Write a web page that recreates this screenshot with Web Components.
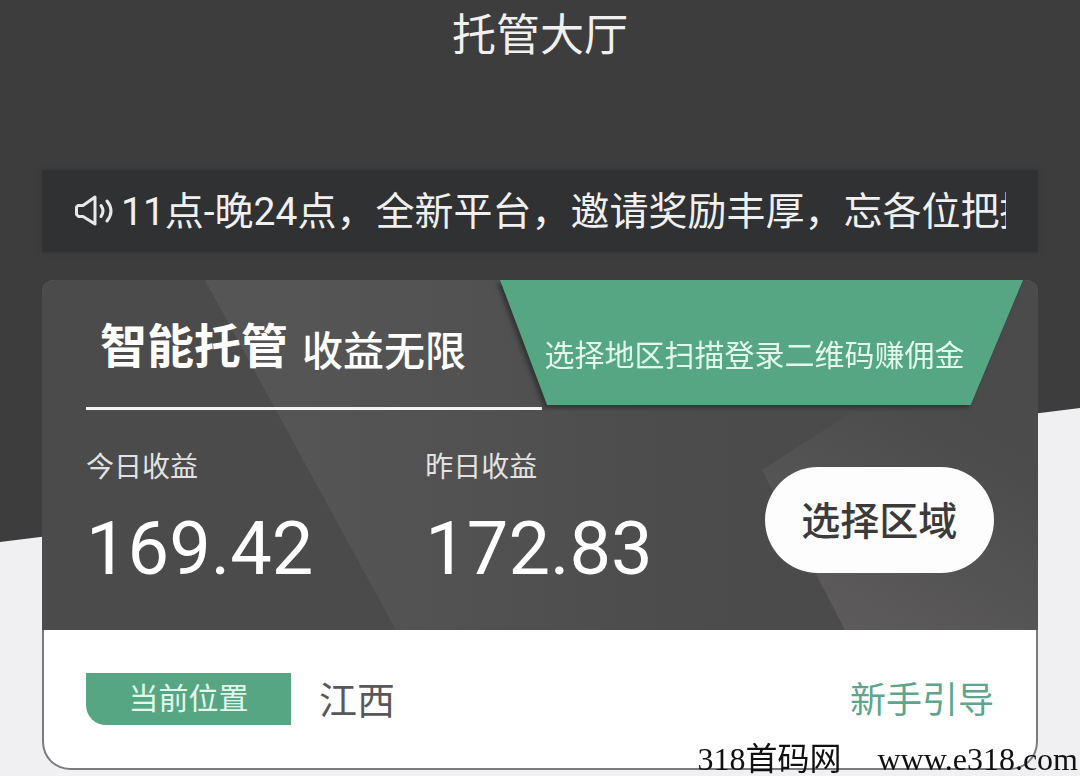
<!DOCTYPE html>
<html lang="zh-CN">
<head>
<meta charset="utf-8">
<title>托管大厅</title>
<style>
    body {
        margin: 0;
        background: #f0f0f3;
        font-family: Roboto, "Noto Sans CJK SC", sans-serif;
    }
</style>
</head>
<body>
<hosting-hall heading="托管大厅">
    <notice-bar>11点-晚24点，全新平台，邀请奖励丰厚，忘各位把握</notice-bar>
    <income-card>
        <span slot="title">智能托管</span>
        <span slot="subtitle">收益无限</span>
        <tip-ribbon slot="tip">选择地区扫描登录二维码赚佣金</tip-ribbon>
        <income-stat slot="stats" label="今日收益" value="169.42"></income-stat>
        <income-stat slot="stats" label="昨日收益" value="172.83"></income-stat>
        <area-button slot="action">选择区域</area-button>
        <location-bar slot="footer" label="当前位置" place="江西" guide="新手引导"></location-bar>
    </income-card>
</hosting-hall>
<site-mark name="318首码网" site="www.e318.com"></site-mark>

<script>
class HostingHall extends HTMLElement {
    constructor() {
        super();
        this.attachShadow({ mode: 'open' });
    }

    connectedCallback() {
        this.shadowRoot.innerHTML = `
            <style>
                :host {
                    display: block;
                    position: relative;
                }
                .backdrop {
                    position: absolute;
                    inset: 0;
                    z-index: -1;
                    background: #3d3d3d;
                    clip-path: polygon(0 0, 100% 0, 100% 408px, 0 542px);
                }
                h1 {
                    margin: 0;
                    height: 170px;
                    font-size: 44px;
                    font-weight: 400;
                    line-height: 72px;
                    text-align: center;
                    color: #f0f0f0;
                    box-sizing: border-box;
                }
                main {
                    display: flex;
                    flex-direction: column;
                    gap: 28px;
                    padding: 0 42px;
                }
            </style>
            <div class="backdrop"></div>
            <h1></h1>
            <main><slot></slot></main>
        `;
        this.shadowRoot.querySelector('h1').textContent = this.getAttribute('heading');
    }
}

class NoticeBar extends HTMLElement {
    constructor() {
        super();
        this.attachShadow({ mode: 'open' });
        this.shadowRoot.innerHTML = `
            <style>
                :host {
                    display: flex;
                    align-items: center;
                    gap: 5px;
                    height: 82px;
                    padding: 0 32px;
                    background: #2f3132;
                    box-shadow: 0 0 4px #343536;
                    color: #f0f0f0;
                }
                svg {
                    flex: none;
                    width: 42px;
                    height: 36px;
                }
                p {
                    flex: 1;
                    min-width: 0;
                    margin: 0;
                    padding-top: 2px;
                    overflow: hidden;
                    font-size: 39px;
                    line-height: 60px;
                    white-space: nowrap;
                }
            </style>
            <svg viewBox="0 0 42 36" fill="none" stroke="#e8e8e8" stroke-width="3" stroke-linejoin="round" stroke-linecap="round">
                <path d="M4 12.500h5L21 4v27L9 23.500H4.500L2.500 21.500V14z"/>
                <path d="M27 12.500q4 5.500 0 11"/>
                <path d="M33 8q8 10 0 20"/>
            </svg>
            <p><slot></slot></p>
        `;
    }
}

class IncomeCard extends HTMLElement {
    constructor() {
        super();
        this.attachShadow({ mode: 'open' });
        this.shadowRoot.innerHTML = `
            <style>
                :host {
                    display: block;
                    overflow: hidden;
                    border-radius: 12px 12px 28px 28px;
                    background: #7b7b7d;
                }
                .panel {
                    position: relative;
                    height: 350px;
                    background: #4b4b4b;
                }
                .facets {
                    position: absolute;
                    width: 100%;
                    height: 100%;
                }
                .body {
                    position: relative;
                }
                .top {
                    display: grid;
                    grid-template-columns: 458fr 523fr 15fr;
                    height: 125px;
                }
                .titles {
                    display: flex;
                    align-items: flex-end;
                    gap: 14px;
                    height: 70px;
                    padding: 32px 0 0 58px;
                    color: #fff;
                    white-space: nowrap;
                }
                h2, h3 {
                    margin: 0;
                }
                h2 {
                    font-size: 47px;
                    font-weight: 700;
                    line-height: 70px;
                }
                h3 {
                    font-size: 41px;
                    font-weight: 500;
                    line-height: 60px;
                }
                .rule {
                    width: 456px;
                    max-width: 46%;
                    height: 3px;
                    margin: 2px 0 0 44px;
                    background: #f4f4f4;
                }
                .stats {
                    display: grid;
                    grid-template-columns: 340fr 340fr 230fr;
                    padding: 36px 44px 0 44px;
                }
                .footer {
                    margin: 0 2px 2px;
                    border-radius: 0 0 26px 26px;
                    background: #fff;
                }
            </style>
            <section class="panel">
                <svg class="facets" viewBox="0 0 996 350" preserveAspectRatio="none">
                    <defs>
                        <linearGradient id="wide" x1="0" x2="1">
                            <stop offset="0.200" stop-color="#555"/>
                            <stop offset="1" stop-color="#4b4b4b"/>
                        </linearGradient>
                        <linearGradient id="small" gradientUnits="userSpaceOnUse" x1="790" y1="330" x2="900" y2="130">
                            <stop offset="0" stop-color="#5c5a5b"/>
                            <stop offset="1" stop-color="#4b4b4b"/>
                        </linearGradient>
                    </defs>
                    <path d="M163 0H690V350H354z" fill="url(#wide)"/>
                    <path d="M720 190L810 132H996V350H803z" fill="url(#small)"/>
                </svg>
                <div class="body">
                    <div class="top">
                        <div class="titles">
                            <h2><slot name="title"></slot></h2>
                            <h3><slot name="subtitle"></slot></h3>
                        </div>
                        <slot name="tip"></slot>
                    </div>
                    <div class="rule"></div>
                    <div class="stats">
                        <slot name="stats"></slot>
                        <slot name="action"></slot>
                    </div>
                </div>
            </section>
            <div class="footer"><slot name="footer"></slot></div>
        `;
    }
}

class TipRibbon extends HTMLElement {
    constructor() {
        super();
        this.attachShadow({ mode: 'open' });
        this.shadowRoot.innerHTML = `
            <style>
                :host {
                    display: block;
                    filter: drop-shadow(-3px 3px 2px #303532);
                }
                div {
                    height: 125px;
                    padding: 28px 14px 0 0;
                    box-sizing: border-box;
                    background: #57a683;
                    clip-path: polygon(0 0, 100% 0, 90% 100%, 9% 100%);
                    color: #e2f8ec;
                    font-size: 30px;
                    line-height: 96px;
                    text-align: center;
                    white-space: nowrap;
                }
            </style>
            <div><slot></slot></div>
        `;
    }
}

class IncomeStat extends HTMLElement {
    constructor() {
        super();
        this.attachShadow({ mode: 'open' });
    }

    connectedCallback() {
        this.shadowRoot.innerHTML = `
            <style>
                :host {
                    display: block;
                }
                .label {
                    font-size: 28px;
                    line-height: 44px;
                    color: #e2e2e2;
                }
                .value {
                    margin-top: 14px;
                    font-size: 74px;
                    line-height: 90px;
                    color: #fff;
                }
            </style>
            <div class="label"></div>
            <div class="value"></div>
        `;
        this.shadowRoot.querySelector('.label').textContent = this.getAttribute('label');
        this.shadowRoot.querySelector('.value').textContent = this.getAttribute('value');
    }
}

class AreaButton extends HTMLElement {
    constructor() {
        super();
        this.attachShadow({ mode: 'open' });
        this.shadowRoot.innerHTML = `
            <style>
                :host {
                    display: block;
                    padding-top: 21px;
                }
                button {
                    width: 100%;
                    height: 106px;
                    padding: 0 0 4px;
                    border: 0;
                    border-radius: 53px;
                    background: #fefdfe;
                    color: #3c3a3b;
                    font: inherit;
                    font-size: 39px;
                    font-weight: 500;
                    white-space: nowrap;
                }
            </style>
            <button type="button"><slot></slot></button>
        `;
    }
}

class LocationBar extends HTMLElement {
    constructor() {
        super();
        this.attachShadow({ mode: 'open' });
    }

    connectedCallback() {
        this.shadowRoot.innerHTML = `
            <style>
                :host {
                    display: flex;
                    align-items: center;
                    height: 138px;
                    padding: 0 42px;
                }
                .badge {
                    width: 205px;
                    border-radius: 0 0 0 20px;
                    background: #57a683;
                    color: #e2f8ec;
                    font-size: 30px;
                    line-height: 52px;
                    text-align: center;
                }
                .place, a {
                    padding-top: 4px;
                    line-height: 56px;
                }
                .place {
                    margin-left: 28px;
                    font-size: 38px;
                    color: #58585a;
                }
                a {
                    margin-left: auto;
                    font-size: 36px;
                    color: #5ea58c;
                    text-decoration: none;
                }
            </style>
            <span class="badge"></span>
            <span class="place"></span>
            <a href="#guide"></a>
        `;
        this.shadowRoot.querySelector('.badge').textContent = this.getAttribute('label');
        this.shadowRoot.querySelector('.place').textContent = this.getAttribute('place');
        this.shadowRoot.querySelector('a').textContent = this.getAttribute('guide');
    }
}

class SiteMark extends HTMLElement {
    constructor() {
        super();
        this.attachShadow({ mode: 'open' });
    }

    connectedCallback() {
        // sits over the bottom corner of the card
        this.shadowRoot.innerHTML = `
            <style>
                :host {
                    position: fixed;
                    right: 2px;
                    bottom: 0;
                    display: flex;
                    gap: 36px;
                    font-family: "Liberation Serif", "Noto Sans CJK SC", serif;
                    font-size: 32px;
                    line-height: 34px;
                    color: #111;
                }
                a {
                    color: inherit;
                    text-decoration: none;
                }
            </style>
            <span></span>
            <a href="#site"></a>
        `;
        this.shadowRoot.querySelector('span').textContent = this.getAttribute('name');
        this.shadowRoot.querySelector('a').textContent = this.getAttribute('site');
    }
}

customElements.define('hosting-hall', HostingHall);
customElements.define('notice-bar', NoticeBar);
customElements.define('income-card', IncomeCard);
customElements.define('tip-ribbon', TipRibbon);
customElements.define('income-stat', IncomeStat);
customElements.define('area-button', AreaButton);
customElements.define('location-bar', LocationBar);
customElements.define('site-mark', SiteMark);
</script>
</body>
</html>
